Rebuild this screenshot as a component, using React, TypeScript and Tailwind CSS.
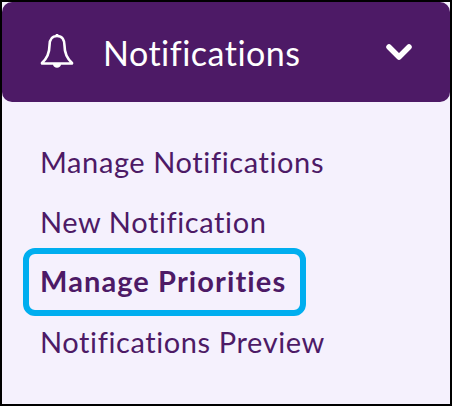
const links = [
  { label: "Manage Notifications" },
  { label: "New Notification" },
  { label: "Manage Priorities", active: true },
  { label: "Notifications Preview" },
];

export default function App() {
  return (
    <div className="w-[452px] h-[406px] border-2 border-black bg-[#f5f1fd] font-['Lato',sans-serif] overflow-hidden [font-variant-ligatures:none]">
      <div className="h-[100px] bg-[#4d1a66] rounded-[10px] flex items-center pl-[38px] pr-[37px] text-white">
        <svg className="w-[35px] h-[36px] -mt-[2px]" viewBox="0 0 35 36" fill="none" stroke="currentColor" strokeWidth={2.6} strokeLinejoin="round">
          <path d="M17 3C11.500 3 9.500 7 9.500 12.500c0 7-1.500 12-7.500 17.500v.5h30V30c-6-5.500-7.500-10.500-7.500-17.500C24.500 7 22.500 3 17 3z" />
          <path d="M17 1v2" />
          <path d="M13 31c0 5 8 5 8 0z" fill="currentColor" stroke="none" />
        </svg>
        <span className="ml-[28px] text-[34px] tracking-[0.5px] flex-1">Notifications</span>
        <svg className="w-[28px] h-[20px]" viewBox="0 0 28 20" fill="none" stroke="currentColor" strokeWidth={5.5} strokeLinecap="round" strokeLinejoin="round">
          <path d="M4 5l10 10L24 5" />
        </svg>
      </div>
      <ul className="pt-[30px] pl-[21px] flex flex-col items-start text-[#4d1a66] text-[29px] tracking-[0.6px] leading-[60px]">
        {links.map((link) =>
          link.active ? (
            <li key={link.label} className="h-[68px] -my-[4px] w-[283px] border-[6px] border-[#00aeef] rounded-[12px] pl-[11px] font-bold tracking-[1.1px] leading-[54px]">
              {link.label}
            </li>
          ) : (
            <li key={link.label} className="pl-[17px] h-[60px]">
              {link.label}
            </li>
          )
        )}
      </ul>
    </div>
  );
}
